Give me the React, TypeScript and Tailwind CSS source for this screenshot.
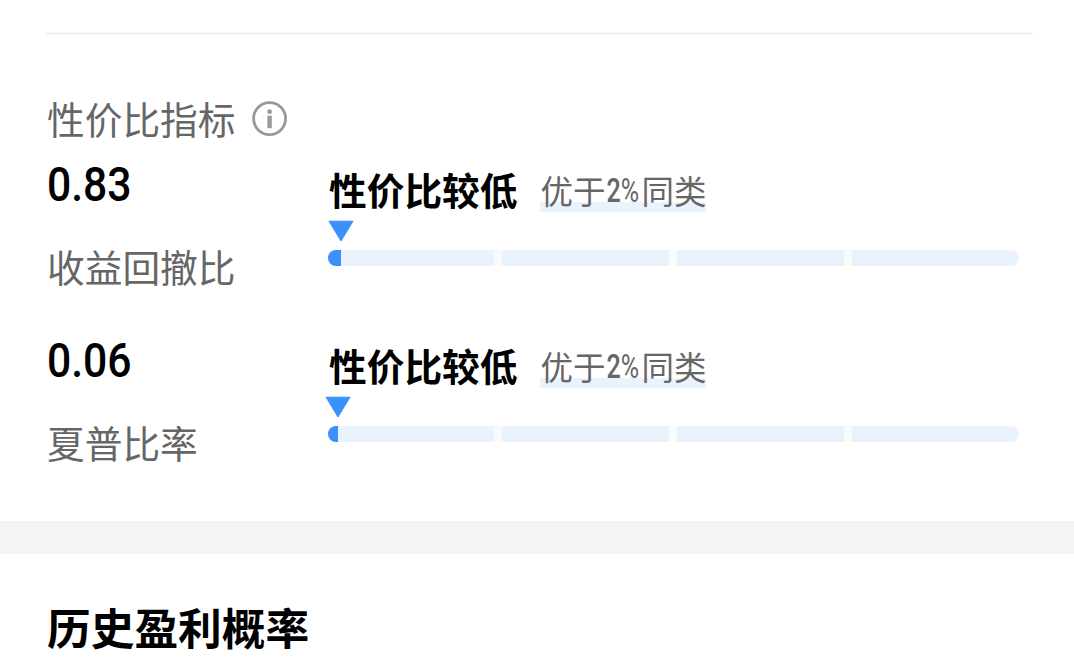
import React from "react";

type Metric = { value: string; label: string; marker: string; fill: string };

const metrics: Metric[] = [
  { value: "0.83", label: "收益回撤比", marker: "ml-0", fill: "w-[13px]" },
  { value: "0.06", label: "夏普比率", marker: "-ml-[3px]", fill: "w-[10px]" },
];

function InfoIcon() {
  return (
    <svg className="mt-[7px] ml-[16px] h-[36px] w-[36px] shrink-0" viewBox="0 0 36 36" fill="none">
      <circle cx="18.6" cy="17.6" r="16" stroke="#999" strokeWidth="2.8" />
      <circle cx="18.6" cy="10.7" r="2.4" fill="#999" />
      <path d="M18.6 14.7V27.2" stroke="#999" strokeWidth="4.4" />
    </svg>
  );
}

function MetricRow({ value, label, marker, fill }: Metric) {
  return (
    <div className="flex h-[176px] pl-[47px]">
      <div className="w-[281px] shrink-0">
        <div className="h-[88px] origin-left scale-x-[0.88] font-[Roboto] text-[48.5px] leading-[60px] font-medium text-black">{value}</div>
        <div className="text-[37.7px] leading-[46px] whitespace-nowrap text-[#666]">{label}</div>
      </div>
      <div className="w-[691px]">
        <div className="flex h-[65px] items-start whitespace-nowrap">
          <span className="pt-[11px] pl-px text-[37.7px] leading-[46px] font-bold text-black">性价比较低</span>
          <span className="mt-[17px] ml-[23px] flex h-[40px] w-[166px] bg-[linear-gradient(to_bottom,transparent_30px,#eaf2fe_30px)] text-[32.5px] leading-[35px] text-[#666]">
            <span>优于</span>
            <span className="w-[36px] shrink-0 origin-left scale-x-[0.76] pl-[2px] font-[Roboto] text-[33px] leading-[38px]"><span className="font-medium">2</span>%</span>
            <span>同类</span>
          </span>
        </div>
        <svg className={`h-[22px] w-[26px] ${marker}`} viewBox="0 0 26 22">
          <path d="M1 1.2H25L13 21Z" fill="#3b91fb" stroke="#3b91fb" strokeLinejoin="round" />
        </svg>
        <div className="mt-[7.5px] grid h-[16.5px] grid-cols-[166px_167px_167px_167px] gap-[8px] overflow-hidden rounded-full bg-[#fafafa]">
          <div className="bg-[#eaf2fe]"><div className={`h-full bg-[#3b91fb] ${fill}`} /></div>
          <div className="bg-[#eaf2fe]" />
          <div className="bg-[#eaf2fe]" />
          <div className="bg-[#eaf2fe]" />
        </div>
      </div>
    </div>
  );
}

export default function App() {
  return (
    <main className="h-[660px] w-[1074px] overflow-hidden bg-white font-['Noto_Sans_CJK_SC',sans-serif]">
      <div className="ml-[46px] h-[94px] w-[987px] pt-[32px]"><div className="h-[3px] border-y border-[#f9f9f9] bg-[#ededed]" /></div>
      <header className="flex h-[61px] pl-[47px]">
        <h2 className="text-[37.7px] leading-[48px] font-normal text-[#666]">性价比指标</h2>
        <InfoIcon />
      </header>
      {metrics.map((m) => <MetricRow key={m.label} {...m} />)}
      <div className="mt-[14px] h-[33px] bg-[#f4f4f4]" />
      <h1 className="pt-[44px] pl-[47px] text-[43.7px] leading-[56px] font-bold text-black">历史盈利概率</h1>
    </main>
  );
}
